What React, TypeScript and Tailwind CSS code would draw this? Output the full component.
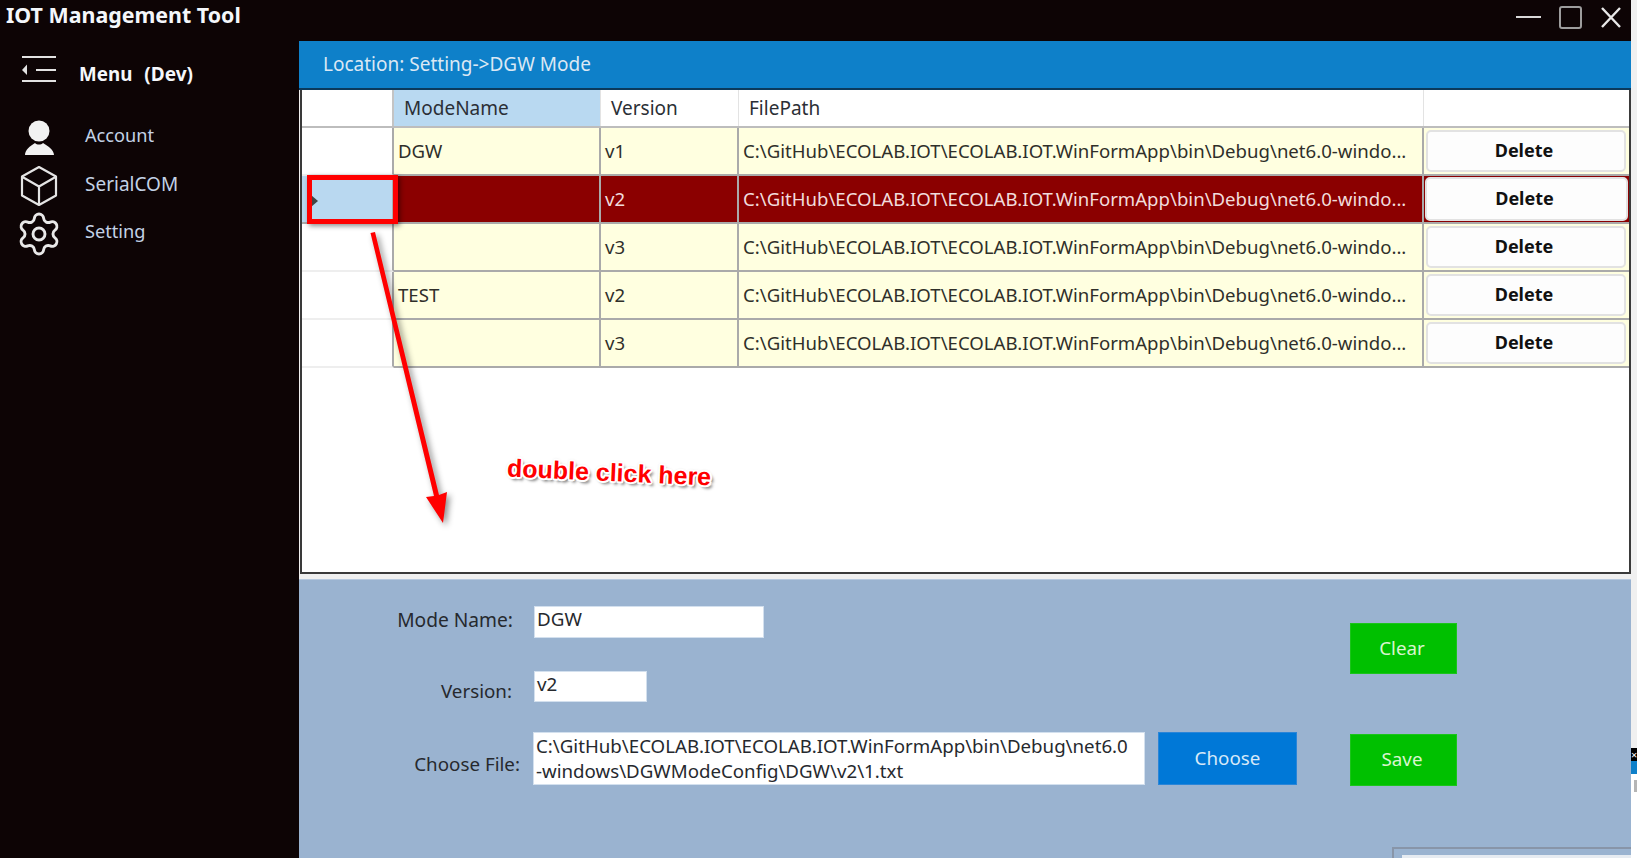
import { Settings } from "lucide-react";

const FONT = "font-['Noto_Sans','Open_Sans',sans-serif]";
const PATH = "C:\\GitHub\\ECOLAB.IOT\\ECOLAB.IOT.WinFormApp\\bin\\Debug\\net6.0-windo...";

const ROWS = [
  { name: "DGW", version: "v1" },
  { name: "", version: "v2", selected: true },
  { name: "", version: "v3" },
  { name: "TEST", version: "v2" },
  { name: "", version: "v3" },
];

function TitleBar() {
  return (
    <div className="flex h-[41px] items-center justify-between">
      <div className="pb-[11px] pl-[6px] text-[21.4px] leading-none font-bold text-[#f4f7fb]">IOT Management Tool</div>
      <svg width="115" height="41" viewBox="0 0 115 41" fill="none">
        <path d="M0 17H25" stroke="#d8d8d8" strokeWidth="2" />
        <rect x="44" y="7" width="21" height="21" rx="2" stroke="#9d9d9d" strokeWidth="2" />
        <path d="M86 8L104 27M104 8L86 27" stroke="#e8e8e8" strokeWidth="2.4" />
      </svg>
    </div>
  );
}

function Sidebar() {
  return (
    <aside className="w-[299px] shrink-0 text-[18.2px] text-[#c3d2e6]">
      <div className="flex h-[66px] items-center">
        <svg width="60" height="48" viewBox="0 0 60 48" fill="none" className="mr-[9px] ml-[10px]">
          <path d="M12 7H46M26 20H46M12 31H46" stroke="#e2e2e2" strokeWidth="2" />
          <path d="M17 14.5V25L12 20Z" fill="#e2e2e2" />
        </svg>
        <span className="text-[18.8px] font-bold text-[#f5f7fb]">Menu</span>
        <span className="ml-[12px] text-[19px] font-bold text-[#f5f7fb]">(Dev)</span>
      </div>
      <nav className="mt-[5px]">
        <div className="flex h-[48px] items-center">
          <svg width="60" height="48" viewBox="0 0 60 48" className="mr-[15px] ml-[10px]" fill="#f2f2f2">
            <circle cx="29" cy="19" r="10.5" />
            <path d="M15 43C15 38 20 34 25 31C27 33 31 33 33 31C38 34 44 38 44 43Z" />
          </svg>
          <span>Account</span>
        </div>
        <div className="flex h-[48px] items-center">
          <svg width="60" height="48" viewBox="0 0 60 48" fill="none" className="mr-[15px] ml-[10px]" stroke="#e4e4e4" strokeWidth="2.2" strokeLinejoin="round">
            <path d="M29 7L46 16.5V35.5L29 45L12 35.5V16.5Z" />
            <path d="M12.5 17L29 26.5L45.5 17M29 26.5V44" />
          </svg>
          <span className="text-[19px]">SerialCOM</span>
        </div>
        <div className="flex h-[48px] items-center">
          <Settings size={48} strokeWidth={1.45} className="mt-1 mr-[22px] ml-[15px] text-[#e8e8e8]" />
          <span>Setting</span>
        </div>
      </nav>
    </aside>
  );
}

function HeaderRow() {
  return (
    <div className="flex h-[38px] border-b-2 border-[#bdbdbd] text-[19px] text-[#2b2f36]">
      <div className="w-[92px] border-r-2 border-[#c4c4c4]" />
      <div className="flex w-[207px] items-center border-r border-[#e3e3e3] bg-[#b9d9f1] pl-[10px]">ModeName</div>
      <div className="flex w-[138px] items-center border-r border-[#e3e3e3] pl-[10px]">Version</div>
      <div className="flex w-[685px] items-center border-r border-[#e3e3e3] pl-[10px]">FilePath</div>
      <div className="flex-1" />
    </div>
  );
}

function DataRow({ name, version, selected }: { name: string; version: string; selected?: boolean }) {
  return (
    <div className={selected ? "flex h-[48px] bg-[#8b0000] text-[18.6px] text-[#f1dcdc]" : "flex h-[48px] bg-[#ffffe0] text-[18.6px] text-[#2f2f2a]"}>
      <div className={selected ? "flex w-[92px] items-center border-r-2 border-b-2 border-[#aaaaaa] bg-[#b9d8f0] pt-[3px] pl-[9px]" : "w-[92px] border-r-2 border-b-2 border-r-[#aaaaaa] border-b-[#eeeeee] bg-white"}>
        {selected && <span className="h-0 w-0 border-y-[6px] border-l-[7px] border-y-transparent border-l-[#444444]" />}
      </div>
      <div className="flex w-[207px] items-center border-r-2 border-b-2 border-[#aaaaaa] pb-[1px] pl-[4px]">{name}</div>
      <div className="flex w-[138px] items-center border-r-2 border-b-2 border-[#aaaaaa] pb-[1px] pl-[4px]">{version}</div>
      <div className="flex w-[685px] items-center border-r-2 border-b-2 border-[#aaaaaa] pb-[1px] pl-[4px] whitespace-nowrap">{PATH}</div>
      <div className={selected ? "flex flex-1 border-b-2 border-[#aaaaaa] p-[1px]" : "flex flex-1 border-b-2 border-[#aaaaaa] py-[2px] pr-[3px] pl-[2px]"}>
        <button type="button" className="flex-1 rounded-[5px] border-2 border-[#e2e2e2] bg-[#fdfdfd] pr-[4px] pb-[1px] text-[18px] font-bold text-[#111111]">
          Delete
        </button>
      </div>
    </div>
  );
}

function ModeForm() {
  return (
    <section className="flex h-[279px] border-t border-[#b7c9df] bg-[#9ab3d0] text-[18.8px] text-[#26292e]">
      <div className="w-[1051px] pt-[26px]">
        <div className="flex h-[32px]">
          <span className="w-[214px] text-right text-[19.2px] leading-[28px]">Mode Name:</span>
          <div className="ml-[21px] w-[230px] border border-[#d3e0ee] bg-white pl-[2px] leading-[24px]">DGW</div>
        </div>
        <div className="mt-[33px] flex h-[31px]">
          <span className="w-[213px] pt-[7px] text-right leading-[26px]">Version:</span>
          <div className="ml-[22px] w-[113px] border border-[#d3e0ee] bg-white pl-[2px] leading-[24px]">v2</div>
        </div>
        <div className="mt-[30px] flex h-[53px] items-center">
          <span className="w-[221px] pt-[12px] text-right">Choose File:</span>
          <div className="ml-[13px] h-full w-[612px] border border-[#d3e0ee] bg-white pl-[2px] text-[18.7px] leading-[25px] whitespace-nowrap">
            C:\GitHub\ECOLAB.IOT\ECOLAB.IOT.WinFormApp\bin\Debug\net6.0
            <br />
            -windows\DGWModeConfig\DGW\v2\1.txt
          </div>
          <button type="button" className="ml-[13px] h-full w-[139px] border border-[#2a85d8] bg-[#0078d7] text-[#d7e9f8]">
            Choose
          </button>
        </div>
      </div>
      <div className="flex w-[107px] flex-col gap-[60px] pt-[43px] text-[#d9f5cf]">
        <button type="button" className="h-[51px] border border-[#1bc41b] bg-[#00c000] pr-[3px]">Clear</button>
        <button type="button" className="h-[52px] border border-[#1bc41b] bg-[#00c000] pr-[3px] pb-[2px]">Save</button>
      </div>
    </section>
  );
}

// annotation drawn on top of the screenshot
function Annotation() {
  return (
    <>
      <div className="absolute top-[175px] left-[307px] h-[49px] w-[91px] border-[5px] border-[#ff0000] shadow-[2px_2px_5px_rgba(0,0,0,0.45)]" />
      <svg width="90" height="300" viewBox="0 0 90 300" className="absolute top-[230px] left-[365px] drop-shadow-[3px_3px_3px_rgba(0,0,0,0.45)]">
        <path d="M5.5 3L10 2L74 265L82 262L78 293L61 267L69 266Z" fill="#ff0000" />
      </svg>
      <div className="absolute top-[455px] left-[507px] rotate-[2.5deg] font-['Liberation_Sans',sans-serif] text-[25px] leading-[34px] font-bold whitespace-nowrap text-[#ff0000] [text-shadow:-1.5px_-1.5px_0_#fff,1.5px_-1.5px_0_#fff,-1.5px_1.5px_0_#fff,1.5px_1.5px_0_#fff,0_-2px_0_#fff,0_2px_0_#fff,-2px_0_0_#fff,2px_0_0_#fff,0_0_3px_rgba(0,0,0,0.5),3px_3px_3px_rgba(0,0,0,0.55)]">
        double click here
      </div>
      <div className="absolute top-[847px] left-[1392px] h-[11px] w-[239px] border-t-2 border-l-2 border-[#8895a8] pt-[6px] pl-[8px]">
        <div className="h-[3px] w-full bg-[#e6ebf1]" />
      </div>
    </>
  );
}

export default function App() {
  return (
    <div className={`relative flex h-[858px] w-[1637px] overflow-hidden bg-[#f0f0f0] ${FONT}`}>
      <div className="flex w-[1631px] flex-col bg-[#0d0405]">
        <TitleBar />
        <div className="flex flex-1">
          <Sidebar />
          <main className="flex w-[1332px] flex-col bg-[#f0f0f0]">
            <div className="flex h-[49px] items-center border-b-2 border-[#0b3a5c] bg-[#0e80c9] pl-[24px] text-[19px] text-[#dbe8f4]">
              Location: Setting-&gt;DGW Mode
            </div>
            <div className="ml-[1px] h-[484px] border-r-2 border-b-2 border-l-2 border-[#3a3a3a] bg-white">
              <HeaderRow />
              {ROWS.map((r, i) => (
                <DataRow key={i} name={r.name} version={r.version} selected={r.selected} />
              ))}
            </div>
            <div className="h-[5px]" />
            <ModeForm />
          </main>
        </div>
      </div>
      <div className="w-[6px] pt-[748px]">
        <div className="h-[13px] bg-black text-[11px] leading-[13px] text-white">×</div>
        <div className="h-[13px] bg-[#0e80c9]" />
        <div className="h-[84px] bg-white pt-[6px]">
          <div className="ml-[3px] h-[12px] w-[3px] bg-[#b5b5b5]" />
        </div>
      </div>
      <Annotation />
    </div>
  );
}
